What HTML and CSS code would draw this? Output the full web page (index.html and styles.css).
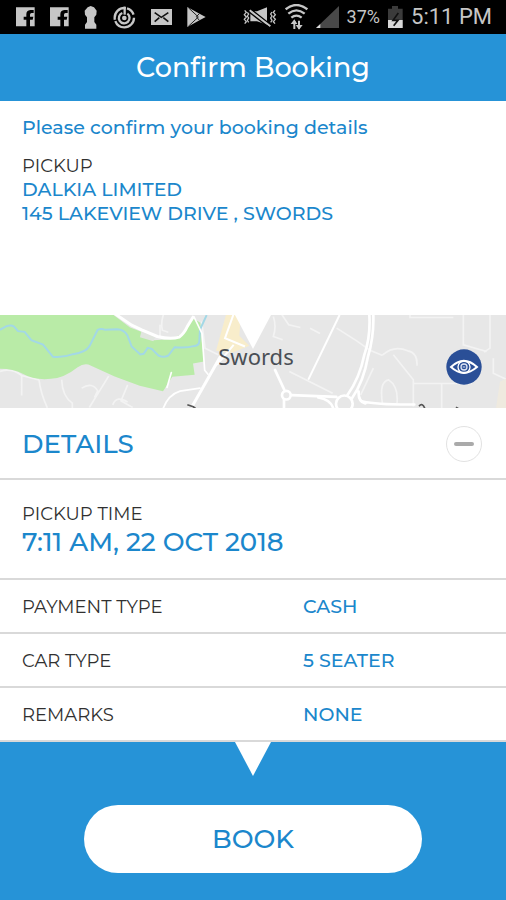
FILE: index.html
```html
<!DOCTYPE html>
<html lang="en">
<head>
<meta charset="utf-8">
<meta name="viewport" content="width=device-width, initial-scale=1">
<title>Confirm Booking</title>
<link rel="stylesheet" href="styles.css">
</head>
<body>
<div class="screen">
  <div class="status-bar">
    <div class="status-group notifications">
      <svg width="19" height="20" viewBox="0 0 57 60" aria-hidden="true"><path fill="#c6c6c6" d="M0 1h56v57H42V38h8l2-9H42v-6q0-5 5-5h6v-9H43q-12 1-12 13v7h-8v9h8v20H0z"/></svg>
      <svg width="19" height="20" viewBox="0 0 57 60" aria-hidden="true"><path fill="#c6c6c6" d="M0 1h56v57H42V38h8l2-9H42v-6q0-5 5-5h6v-9H43q-12 1-12 13v7h-8v9h8v20H0z"/></svg>
      <svg width="14" height="23" viewBox="0 0 42 69" aria-hidden="true"><path fill="#c6c6c6" d="M11 4 20 0l10 4 8 10-1 12-6 8v14l6 8v12H3V56l6-8V34l-6-8-1-12z"/></svg>
      <svg width="23" height="23" viewBox="0 0 69 69" aria-hidden="true" fill="none" stroke="#c6c6c6"><circle cx="34" cy="35" r="29" stroke-width="7" stroke-dasharray="80 4 56 4 28 11"/><path stroke-width="7" d="M28 21a16 16 0 1 0 15 2"/><path stroke-width="7" d="M35 2v24"/><circle cx="34" cy="36" r="7" fill="#c6c6c6" stroke="none"/></svg>
      <svg width="21" height="16" viewBox="0 0 63 48" aria-hidden="true"><path fill="#c6c6c6" d="M0 0h63v48H0z"/><path fill="none" stroke="#111" stroke-width="5" d="m11 11 20 14 21-14M11 38l14-12m27 12L37 26"/></svg>
      <svg width="19" height="20" viewBox="0 0 57 60" aria-hidden="true"><path fill="#c6c6c6" d="M1 0 39 21l17 9-17 9L1 60z"/><path fill="none" stroke="#222" stroke-width="3" d="m4 2 30 28L4 58M37 20l-9 9 9 11"/></svg>
    </div>
    <div class="status-group system">
      <svg width="34" height="22" viewBox="0 0 102 66" aria-hidden="true" fill="none" stroke="#c6c6c6" stroke-width="4"><path fill="#c6c6c6" stroke="none" d="M22 16h20L72 4v52L42 46H22z"/><path stroke="#000" stroke-width="5" d="m20 7 62 49"/><path stroke-width="6" d="m20 13 62 48"/><path stroke="#000" stroke-width="4" d="m18 18 62 48"/><path d="m5 13 5 6-6 7 6 7-6 7 6 7-5 6m8-34 4 5-4 6 4 6-4 7 4 6M96 13l-5 6 6 7-6 7 6 7-6 7 5 6M87 18l-4 6 4 6-4 6 4 7-4 6"/></svg>
      <svg width="23" height="26" viewBox="0 0 69 78" aria-hidden="true" fill="none" stroke="#c6c6c6" stroke-width="7"><path d="M2 16q32-26 65 0M10 29q24-20 49 0M19 41q15-12 31 0"/><path stroke-width="6" d="M28 75V51m14-1v24"/><path fill="#c6c6c6" stroke="none" d="m17 60 11-14 9 14zM32 63h21l-11 14z"/></svg>
      <svg width="23" height="22" viewBox="0 0 69 66" aria-hidden="true"><path fill="#494949" d="M0 66 69 0v66z"/><path fill="#ddd" d="m0 66 13-12v12z"/></svg>
      <span class="battery-level">37%</span>
      <svg width="15" height="22" viewBox="0 0 45 66" aria-hidden="true"><path fill="#3b3b3b" d="M0 8h12V0h18v8h14v58H0z"/><path fill="#d8d8d8" d="M0 42h44v24H0z"/><path fill="none" stroke="#111" stroke-width="5" d="m31 21-16 22h15L17 59"/></svg>
      <span class="clock">5:11 PM</span>
    </div>
  </div>

  <header class="title-bar"><h1>Confirm Booking</h1></header>

  <main>
    <section class="pickup">
      <p class="intro">Please confirm your booking details</p>
      <h2 class="label">PICKUP</h2>
      <p class="value">DALKIA LIMITED</p>
      <p class="value">145 LAKEVIEW DRIVE , SWORDS</p>
    </section>

    <section class="map pointer">
      <svg class="map-art" viewBox="0 30 1518 280" preserveAspectRatio="xMidYMid slice" role="img" aria-label="Map of Swords">
        <path fill="#e7e7e7" d="M0 30h1518v280H0z"/>
        <g fill="none" stroke="#f3f3f3" stroke-width="5">
          <path d="M0 200q35-12 65 12l52 13M65 212v60M117 225q5 40 25 84M185 225q2 50 32 70v15M326 214l-58 94M245 250q32-20 48 8l-10 20M338 300q12-30 45-8M383 240l-20 48 35 20M490 30q-8 24-3 46l18 6M480 60v34M605 50l10 80 40 20"/>
          <path d="M820 35q10 30 0 60l28 10M846 30l20 30 35 8M930 70l30 16M1010 70l60 38 40 28 38 16M868 200l130 65M1148 150q35-30 75-12 30 5 28 45M1180 150l60 75v80M1120 190l-38 80M1148 300q-12-70 18-75 30 20 25 70M1240 236h175M1390 30v90l70 20M1470 30v100l-18 12M1480 160v45l38 18M1325 235v75M1230 30v8h130"/>
        </g>
        <path fill="#b9eba7" d="M0 30h340l50 38 34 13 36 25 50-3 38-16 31-47 22 14 5 60 6 56-33 6 5 34-67 6-28 43-70-16-75-28-79-36q-15-4-32 8-40 32-80 35-50 5-85-15Q40 192 0 192z"/>
        <path fill="#e1e5df" d="m424 80 44 11-8 18-40-12z"/>
        <path fill="#f8edcb" d="m678 30-30 108 50 5 50-20-30-30 5-63z"/>
        <path fill="none" stroke="#fff" stroke-width="6" d="m700 30-25 70 60 25M651 180l50-60"/>
        <path fill="none" stroke="#a3d8e6" stroke-width="6" d="M0 75q28-20 42-10l12 14 20 2 20 25 35 13 30 37q30 3 60-8 38-4 50-25l24-48q10-5 23 0l35-2q20 0 31 18l13 34 26 24 10-2 12-18 12 3 20 20q15 8 30 0l19-25q38 3 56-3 17 0 18-15l2-35 20-43"/>
        <g fill="none" stroke="#fff" stroke-linecap="round">
          <path stroke-width="9" d="m345 27 50 34 30 14 47 20q40 10 65 2 15-10 25-32l17-28"/>
          <path stroke-width="9" d="M578 302 660 157"/>
          <path stroke-width="5" d="M490 310q15-40 50-51l60-9M514 203l-13 45M582 36l24 50 8 110 10 12"/>
          <path stroke-width="6" d="m1018 32-92 190"/>
          <path stroke-width="8" d="m825 195 28 60M874 271l135 5"/>
          <path stroke-width="8" d="M1108 30q4 65-15 120-14 70-52 123M1120 30q2 65-16 125-13 75-48 125M1088 290q45 10 155 9M1076 260q-2 30 20 36M852 284v24M955 278q35 6 44 30"/>
          <circle cx="859" cy="271" r="13" stroke-width="8" fill="#e7e7e7"/>
          <circle cx="1033" cy="297" r="25" stroke-width="8" fill="#e7e7e7"/>
        </g>
        <path fill="#efeadf" d="m1500 230 18-8v88h-30z"/>
        <path fill="none" stroke="#555" stroke-width="5" d="m562 300 18 6 8 6M1257 304q10-12 18 8M1368 307l8 5"/>
        <text class="map-label" x="768" y="181" text-anchor="middle">Swords</text>
      </svg>
      <button class="view-button" type="button" aria-label="View map">
        <svg width="36" height="36" viewBox="0 0 108 108" aria-hidden="true"><circle cx="54" cy="54" r="53" fill="#2a4f97"/><path fill="none" stroke="#fff" stroke-width="6" d="M15 54q38-37 78 0-40 35-78 0z"/><circle cx="54" cy="54" r="18" fill="none" stroke="#fff" stroke-width="4"/><circle cx="54" cy="54" r="9" fill="none" stroke="#dce3f3" stroke-width="4"/><path stroke="#dce3f3" stroke-width="3" d="M50 54h8"/></svg>
      </button>
    </section>

    <section class="details">
      <div class="details-head">
        <h2>DETAILS</h2>
        <button class="collapse-button" type="button" aria-label="Collapse details"><span class="minus"></span></button>
      </div>
      <div class="pickup-time">
        <h3 class="label">PICKUP TIME</h3>
        <p class="time">7:11 AM, 22 OCT 2018</p>
      </div>
      <dl class="facts">
        <div class="fact"><dt class="label">PAYMENT TYPE</dt><dd class="value">CASH</dd></div>
        <div class="fact"><dt class="label">CAR TYPE</dt><dd class="value">5 SEATER</dd></div>
        <div class="fact"><dt class="label">REMARKS</dt><dd class="value">NONE</dd></div>
      </dl>
    </section>
  </main>

  <footer class="actions pointer">
    <button class="book-button" type="button">BOOK</button>
  </footer>
</div>
</body>
</html>
```
FILE: styles.css
```css
:root {
  --blue: #2693d7;
  --text-blue: #1b87cc;
  --ink: #303030;
  --line: #d9d9d9;
  --gutter: 22px;
}

* { box-sizing: border-box; }

body {
  margin: 0;
  background: #fff;
  color: var(--ink);
  font-family: Montserrat, Inter, sans-serif;
  font-size: 18px;
  line-height: 24px;
}

h1, h2, h3, p, dl, dd { margin: 0; font-weight: 500; }

button {
  padding: 0;
  border: 0;
  font: inherit;
  cursor: pointer;
}

svg { display: block; flex: none; }

.screen {
  display: flex;
  flex-direction: column;
  min-height: 100vh;
}

.status-bar {
  display: flex;
  justify-content: space-between;
  align-items: center;
  padding: 0 14px 0 16px;
  background: #000;
  color: #c6c6c6;
  font-family: Roboto, sans-serif;
  line-height: 34px;
}

.status-group { display: flex; align-items: center; }
.notifications { gap: 15px; }
.system { gap: 8px; }
.battery-level { font-size: 18px; }
.clock { font-size: 22px; }

.title-bar {
  padding: 18px var(--gutter) 17px;
  background: var(--blue);
  color: #fff;
  text-align: center;
}

.title-bar h1 { font-size: 27px; line-height: 32px; }

.pickup {
  min-height: 214px;
  padding: 15px var(--gutter);
}

.intro {
  margin-bottom: 14px;
  color: var(--text-blue);
  font-size: 19px;
}

.label {
  color: var(--ink);
  font-size: 18px;
  font-weight: 400;
}

.value {
  color: var(--text-blue);
  font-size: 19px;
}

.pointer { position: relative; }

.pointer::before {
  content: "";
  position: absolute;
  z-index: 1;
  top: 0;
  left: 50%;
  width: 36px;
  height: 34px;
  background: #fff;
  clip-path: polygon(0 0, 100% 0, 50% 100%);
  transform: translateX(-50%);
}

.map-art { width: 100%; height: 93px; }

.map-label {
  fill: #4a4f55;
  font-family: "Noto Sans", sans-serif;
  font-size: 66px;
}

.view-button {
  position: absolute;
  top: 34px;
  right: 24px;
  border-radius: 50%;
  background: none;
}

.details-head {
  display: flex;
  justify-content: space-between;
  align-items: center;
  padding: 18px 24px 16px var(--gutter);
  border-bottom: 2px solid var(--line);
  color: var(--text-blue);
}

.details-head h2 { font-size: 26px; line-height: 32px; }

.collapse-button {
  display: grid;
  place-items: center;
  width: 36px;
  height: 36px;
  border: 1px solid #e2e2e2;
  border-radius: 50%;
  background: #fff;
}

.minus {
  width: 20px;
  height: 4px;
  border-radius: 2px;
  background: #aaa;
}

.pickup-time {
  padding: 22px var(--gutter) 20px;
  border-bottom: 2px solid var(--line);
}

.time {
  color: var(--text-blue);
  font-size: 26px;
  line-height: 32px;
}

.fact {
  display: grid;
  grid-template-columns: 281fr 181fr;
  padding: 15px var(--gutter) 13px;
  border-bottom: 2px solid var(--line);
}

.actions {
  flex: 1;
  display: flex;
  justify-content: center;
  padding: 63px var(--gutter) 28px;
  background: var(--blue);
}

.book-button {
  width: 73%;
  height: 68px;
  border-radius: 34px;
  background: #fff;
  color: var(--text-blue);
  font-size: 26px;
  font-weight: 500;
}
```
